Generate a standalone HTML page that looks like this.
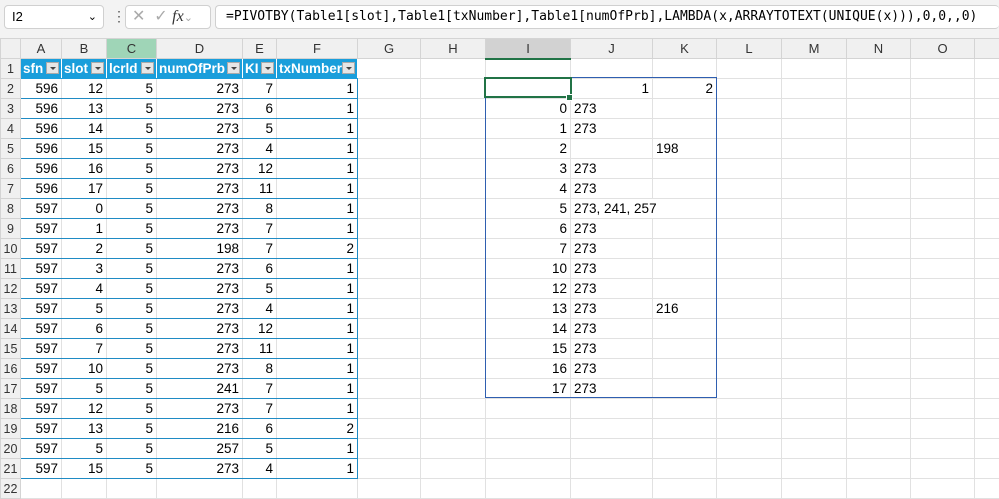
<!DOCTYPE html>
<html><head><meta charset="utf-8"><style>
body{margin:0;width:999px;height:482px;overflow:hidden;background:#fff;font-family:"Liberation Sans",Arial,sans-serif;position:relative}
#fb{position:absolute;left:0;top:0;width:999px;height:38px;background:#f3f3f3;border-bottom:1px solid #d6d6d6}
.box{position:absolute;top:5px;height:24px;background:#fff;border:1px solid #d0d0d0;border-radius:4px;box-sizing:border-box;font-size:13px;line-height:22px}
table{position:absolute;left:0;top:38px;width:1014px;border-collapse:collapse;table-layout:fixed;font-size:13.5px}
td{height:20px;padding:0 3px;border:1px solid #e1e1e1;white-space:nowrap;overflow:hidden;text-align:right;box-sizing:border-box}
tr.h td{background:#f0f0f0;text-align:center;color:#333;font-size:13px;border-color:#d4d4d4}
td.rh{background:#f0f0f0;text-align:center;color:#333;font-size:12.5px;border-color:#d4d4d4;padding:0}
tr.t td.d{border-top:1px solid #1f8bc4;border-bottom:1px solid #1f8bc4}
td.L{border-left:1px solid #1f8bc4}td.R{border-right:1px solid #1f8bc4}
tr.th td.d{background:#1a9edb;color:#fff;font-weight:bold;text-align:left;padding:0 2px;position:relative;border-color:#1a9edb #fff #1a9edb #fff}
.dd{position:absolute;right:2px;top:3px;width:13px;height:12px;background:#e6e6e6;border:1px solid #aaa;box-sizing:border-box}
.dd:after{content:"";position:absolute;left:3px;top:4px;border-left:3px solid transparent;border-right:3px solid transparent;border-top:3px solid #444}
td.l{text-align:left}
</style></head><body>
<div id="fb">
<div class="box" style="left:4px;width:100px;padding-left:7px">I2<span style="position:absolute;right:6px;top:0;font-size:11px">&#8964;</span></div>
<div style="position:absolute;left:112px;top:8px;color:#555;font-size:14px">&#8942;</div>
<div class="box" style="left:125px;width:86px;color:#aaa;padding-left:6px;font-size:16px">✕ &nbsp;✓ <i style="color:#333;font-family:'Liberation Serif',serif;font-size:16px">fx</i><span style="font-size:11px">&#8964;</span></div>
<div class="box" style="left:215px;width:784px;padding-left:10px;font-family:'DejaVu Sans Mono','Liberation Mono',monospace;font-size:13px;border-right:none">=PIVOTBY(Table1[slot],Table1[txNumber],Table1[numOfPrb],LAMBDA(x,ARRAYTOTEXT(UNIQUE(x))),0,0,,0)</div>
</div>
<table>
<colgroup><col style="width:20px"><col style="width:41px"><col style="width:45px"><col style="width:50px"><col style="width:86px"><col style="width:34px"><col style="width:81px"><col style="width:63px"><col style="width:65px"><col style="width:85px"><col style="width:82px"><col style="width:64px"><col style="width:65px"><col style="width:65px"><col style="width:64px"><col style="width:64px"><col style="width:40px"></colgroup>
<tr class="h"><td></td><td>A</td><td>B</td><td style="background:#9fd5b7">C</td><td>D</td><td>E</td><td>F</td><td>G</td><td>H</td><td style="background:#d2d2d2;border-bottom:2px solid #217346">I</td><td>J</td><td>K</td><td>L</td><td>M</td><td>N</td><td>O</td><td></td></tr>
<tr class="th"><td class="rh">1</td><td class="d">sfn<span class="dd"></span></td><td class="d">slot<span class="dd"></span></td><td class="d">lcrld<span class="dd"></span></td><td class="d">numOfPrb<span class="dd"></span></td><td class="d">KI<span class="dd"></span></td><td class="d">txNumber<span class="dd"></span></td><td></td><td></td><td></td><td></td><td></td><td></td><td></td><td></td><td></td><td></td></tr>
<tr class="t"><td class="rh">2</td><td class="d L">596</td><td class="d">12</td><td class="d">5</td><td class="d">273</td><td class="d">7</td><td class="d R">1</td><td></td><td></td><td></td><td>1</td><td>2</td><td></td><td></td><td></td><td></td><td></td></tr>
<tr class="t"><td class="rh">3</td><td class="d L">596</td><td class="d">13</td><td class="d">5</td><td class="d">273</td><td class="d">6</td><td class="d R">1</td><td></td><td></td><td>0</td><td class="l">273</td><td></td><td></td><td></td><td></td><td></td><td></td></tr>
<tr class="t"><td class="rh">4</td><td class="d L">596</td><td class="d">14</td><td class="d">5</td><td class="d">273</td><td class="d">5</td><td class="d R">1</td><td></td><td></td><td>1</td><td class="l">273</td><td></td><td></td><td></td><td></td><td></td><td></td></tr>
<tr class="t"><td class="rh">5</td><td class="d L">596</td><td class="d">15</td><td class="d">5</td><td class="d">273</td><td class="d">4</td><td class="d R">1</td><td></td><td></td><td>2</td><td class="l"></td><td class="l">198</td><td></td><td></td><td></td><td></td><td></td></tr>
<tr class="t"><td class="rh">6</td><td class="d L">596</td><td class="d">16</td><td class="d">5</td><td class="d">273</td><td class="d">12</td><td class="d R">1</td><td></td><td></td><td>3</td><td class="l">273</td><td></td><td></td><td></td><td></td><td></td><td></td></tr>
<tr class="t"><td class="rh">7</td><td class="d L">596</td><td class="d">17</td><td class="d">5</td><td class="d">273</td><td class="d">11</td><td class="d R">1</td><td></td><td></td><td>4</td><td class="l">273</td><td></td><td></td><td></td><td></td><td></td><td></td></tr>
<tr class="t"><td class="rh">8</td><td class="d L">597</td><td class="d">0</td><td class="d">5</td><td class="d">273</td><td class="d">8</td><td class="d R">1</td><td></td><td></td><td>5</td><td class="l" style="overflow:visible;border-right-color:transparent">273, 241, 257</td><td></td><td></td><td></td><td></td><td></td><td></td></tr>
<tr class="t"><td class="rh">9</td><td class="d L">597</td><td class="d">1</td><td class="d">5</td><td class="d">273</td><td class="d">7</td><td class="d R">1</td><td></td><td></td><td>6</td><td class="l">273</td><td></td><td></td><td></td><td></td><td></td><td></td></tr>
<tr class="t"><td class="rh">10</td><td class="d L">597</td><td class="d">2</td><td class="d">5</td><td class="d">198</td><td class="d">7</td><td class="d R">2</td><td></td><td></td><td>7</td><td class="l">273</td><td></td><td></td><td></td><td></td><td></td><td></td></tr>
<tr class="t"><td class="rh">11</td><td class="d L">597</td><td class="d">3</td><td class="d">5</td><td class="d">273</td><td class="d">6</td><td class="d R">1</td><td></td><td></td><td>10</td><td class="l">273</td><td></td><td></td><td></td><td></td><td></td><td></td></tr>
<tr class="t"><td class="rh">12</td><td class="d L">597</td><td class="d">4</td><td class="d">5</td><td class="d">273</td><td class="d">5</td><td class="d R">1</td><td></td><td></td><td>12</td><td class="l">273</td><td></td><td></td><td></td><td></td><td></td><td></td></tr>
<tr class="t"><td class="rh">13</td><td class="d L">597</td><td class="d">5</td><td class="d">5</td><td class="d">273</td><td class="d">4</td><td class="d R">1</td><td></td><td></td><td>13</td><td class="l">273</td><td class="l">216</td><td></td><td></td><td></td><td></td><td></td></tr>
<tr class="t"><td class="rh">14</td><td class="d L">597</td><td class="d">6</td><td class="d">5</td><td class="d">273</td><td class="d">12</td><td class="d R">1</td><td></td><td></td><td>14</td><td class="l">273</td><td></td><td></td><td></td><td></td><td></td><td></td></tr>
<tr class="t"><td class="rh">15</td><td class="d L">597</td><td class="d">7</td><td class="d">5</td><td class="d">273</td><td class="d">11</td><td class="d R">1</td><td></td><td></td><td>15</td><td class="l">273</td><td></td><td></td><td></td><td></td><td></td><td></td></tr>
<tr class="t"><td class="rh">16</td><td class="d L">597</td><td class="d">10</td><td class="d">5</td><td class="d">273</td><td class="d">8</td><td class="d R">1</td><td></td><td></td><td>16</td><td class="l">273</td><td></td><td></td><td></td><td></td><td></td><td></td></tr>
<tr class="t"><td class="rh">17</td><td class="d L">597</td><td class="d">5</td><td class="d">5</td><td class="d">241</td><td class="d">7</td><td class="d R">1</td><td></td><td></td><td>17</td><td class="l">273</td><td></td><td></td><td></td><td></td><td></td><td></td></tr>
<tr class="t"><td class="rh">18</td><td class="d L">597</td><td class="d">12</td><td class="d">5</td><td class="d">273</td><td class="d">7</td><td class="d R">1</td><td></td><td></td><td></td><td></td><td></td><td></td><td></td><td></td><td></td><td></td></tr>
<tr class="t"><td class="rh">19</td><td class="d L">597</td><td class="d">13</td><td class="d">5</td><td class="d">216</td><td class="d">6</td><td class="d R">2</td><td></td><td></td><td></td><td></td><td></td><td></td><td></td><td></td><td></td><td></td></tr>
<tr class="t"><td class="rh">20</td><td class="d L">597</td><td class="d">5</td><td class="d">5</td><td class="d">257</td><td class="d">5</td><td class="d R">1</td><td></td><td></td><td></td><td></td><td></td><td></td><td></td><td></td><td></td><td></td></tr>
<tr class="t"><td class="rh">21</td><td class="d L">597</td><td class="d">15</td><td class="d">5</td><td class="d">273</td><td class="d">4</td><td class="d R">1</td><td></td><td></td><td></td><td></td><td></td><td></td><td></td><td></td><td></td><td></td></tr>
<tr><td class="rh">22</td><td></td><td></td><td></td><td></td><td></td><td></td><td></td><td></td><td></td><td></td><td></td><td></td><td></td><td></td><td></td><td></td></tr>
</table>
<div style="position:absolute;left:485px;top:77px;width:230px;height:319px;border:1px solid #2f5fb0"></div>
<div style="position:absolute;left:484px;top:77px;width:84px;height:17px;border:2px solid #217346"></div>
<div style="position:absolute;left:566px;top:94px;width:5px;height:5px;background:#217346;border:1px solid #fff"></div>
</body></html>
